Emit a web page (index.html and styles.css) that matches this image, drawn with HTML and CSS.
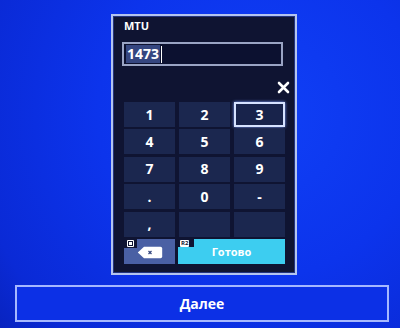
FILE: index.html
```html
<!DOCTYPE html>
<html>
<head>
<meta charset="utf-8">
<link rel="stylesheet" href="styles.css">
</head>
<body>
<div class="screen">
  <div class="dialog">
    <div class="label">MTU</div>
    <div class="input"><span class="sel">1473</span><span class="caret"></span></div>
    <div class="xrow">
      <svg class="xicon" width="13" height="13" viewBox="0 0 13 13"><path d="M2 2 L11 11 M11 2 L2 11" stroke="#fff" stroke-width="2.6" stroke-linecap="round"/></svg>
    </div>
    <div class="keys">
      <div class="key">1</div>
      <div class="key">2</div>
      <div class="key focus">3</div>
      <div class="key">4</div>
      <div class="key">5</div>
      <div class="key">6</div>
      <div class="key">7</div>
      <div class="key">8</div>
      <div class="key">9</div>
      <div class="key">.</div>
      <div class="key">0</div>
      <div class="key">-</div>
      <div class="key">,</div>
      <div class="key"></div>
      <div class="key"></div>
      <div class="key back">
        <span class="notch sq-notch"><span class="sq"><span class="sq-in"></span></span></span>
        <svg class="bs" width="26" height="13" viewBox="0 0 26 13"><path d="M7 0.8 H23.5 Q25.2 0.8 25.2 2.5 V10.5 Q25.2 12.2 23.5 12.2 H7 L0.8 6.5 Z" fill="#fff"/><path d="M11.5 5 L14.5 8 M14.5 5 L11.5 8" stroke="#34467e" stroke-width="1.2"/></svg>
      </div>
      <div class="key done">
        <span class="notch r2-notch"><span class="r2">R2</span></span>
        Готово
      </div>
    </div>
  </div>
  <div class="next">Далее</div>
</div>
</body>
</html>
```
FILE: styles.css
```css
html, body {
  margin: 0;
  padding: 0;
}
body {
  width: 400px;
  height: 328px;
  overflow: hidden;
  background: radial-gradient(ellipse 90% 110% at 65% 35%, #1040f6 0%, #0c34ec 45%, #0a2ad6 80%, #0820b4 100%);
  font-family: "Open Sans", "DejaVu Sans", sans-serif;
  color: #fff;
}
.screen {
  display: flex;
  flex-direction: column;
  padding-top: 14px;
}
.dialog {
  margin-left: 111px;
  width: 186px;
  height: 261px;
  box-sizing: border-box;
  border: 2px solid #b4c4ee;
  background: #0f1432;
  padding: 3px 0 0 9px;
  box-shadow: inset 0 0 0 1px #24357e;
}
.label {
  font-size: 11px;
  font-weight: 700;
  line-height: 13px;
  padding-left: 2px;
}
.input {
  margin-top: 10px;
  width: 161px;
  height: 24px;
  box-sizing: border-box;
  border: 2px solid #9aa4c4;
  background: #0c1130;
  display: flex;
  align-items: center;
  padding-left: 2px;
}
.sel {
  font-size: 14px;
  font-weight: 700;
  line-height: 18px;
  background: #354680;
  padding: 0 1px;
}
.caret {
  width: 1px;
  height: 17px;
  background: #fff;
  margin-left: 1px;
}
.xrow {
  margin-top: 9px;
  margin-left: 2px;
  width: 166px;
  height: 25px;
  display: flex;
  justify-content: flex-end;
  align-items: center;
}
.keys {
  margin-top: 2px;
  margin-left: 2px;
  display: grid;
  grid-template-columns: 51px 51px 51px;
  grid-auto-rows: 25px;
  column-gap: 4px;
  row-gap: 2.4px;
}
.key {
  position: relative;
  background: #1b274f;
  display: flex;
  align-items: center;
  justify-content: center;
  font-size: 14px;
  font-weight: 700;
  line-height: 1;
  box-sizing: border-box;
}
.focus {
  border: 2px solid #d6e2ff;
  box-shadow: 0 0 3px #7fa0ff;
  background: #18234b;
}
.back {
  background: #4a60a4;
}
.bs {
  margin-top: 3px;
}
.done {
  grid-column: span 2;
  background: #3dcdf0;
  font-size: 11px;
  margin-left: -1px;
}
.notch {
  position: absolute;
  left: 0;
  top: 0;
  background: #0f1432;
  display: flex;
  align-items: flex-start;
}
.sq-notch {
  width: 13px;
  height: 9px;
  padding: 1px 0 0 3px;
  box-sizing: border-box;
}
.sq {
  width: 7px;
  height: 7px;
  background: #fff;
  border-radius: 1px;
  display: flex;
  align-items: center;
  justify-content: center;
}
.sq-in {
  width: 3px;
  height: 3px;
  border: 1px solid #0f1432;
}
.r2-notch {
  width: 16px;
  height: 8px;
  padding: 1px 0 0 2px;
  box-sizing: border-box;
}
.r2 {
  background: #fff;
  color: #0f1432;
  font-size: 6px;
  font-weight: 700;
  line-height: 7px;
  height: 7px;
  padding: 0 1px;
  border-radius: 1px;
}
.next {
  margin: 10px 0 0 15px;
  width: 374px;
  height: 37px;
  box-sizing: border-box;
  border: 2px solid #a6b8ff;
  background: #0c30e6;
  display: flex;
  align-items: center;
  justify-content: center;
  font-size: 14px;
  font-weight: 700;
}
```
